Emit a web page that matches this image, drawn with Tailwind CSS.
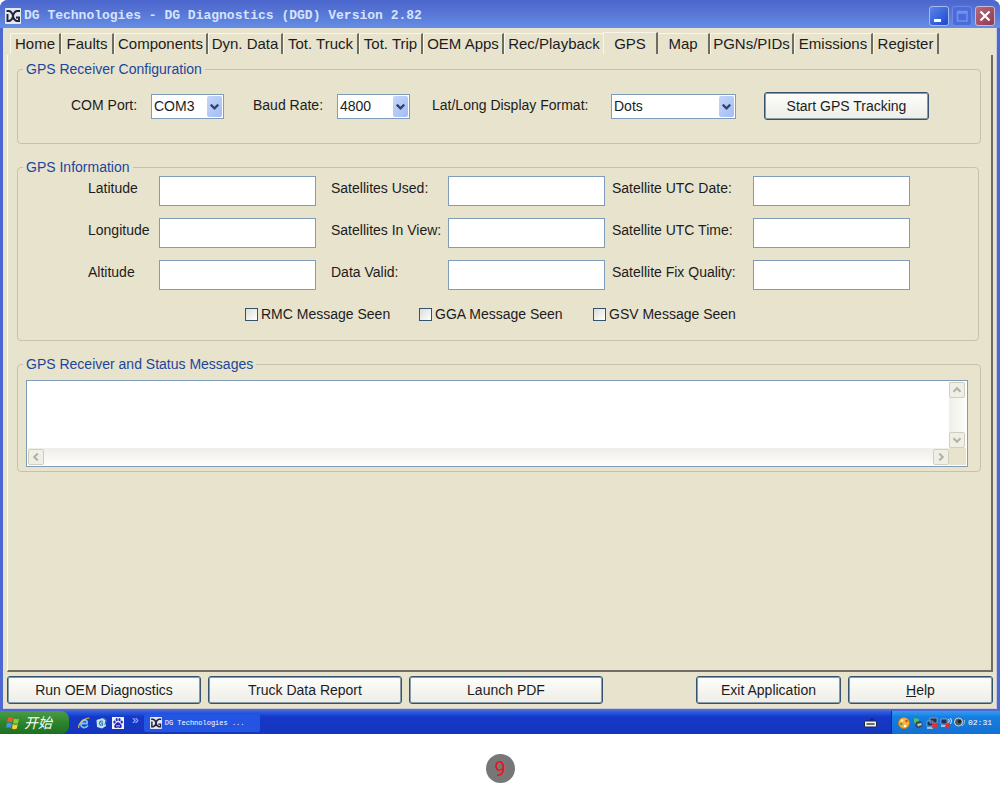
<!DOCTYPE html>
<html lang="en">
<head>
<meta charset="utf-8">
<title>DG Diagnostics</title>
<script src="https://cdn.jsdelivr.net/npm/@tailwindcss/browser@4"></script>
</head>
<body class="bg-white font-['Liberation_Sans',Arial,sans-serif] text-sm leading-4 text-[#1c1c1c]">
<svg class="hidden" aria-hidden="true">
  <symbol id="dg" viewBox="0 0 16 16">
    <rect width="16" height="16" rx="1" fill="#e6e8f1"/>
    <path d="M1.500 3H4Q7 3.500 8 8T12 13H14V9.500H11M1.500 13H4Q7 12.500 8 8T12 3H15M2.500 6V13" fill="none" stroke="#20233a" stroke-width="1.900"/>
  </symbol>
  <symbol id="down" viewBox="0 0 16 16">
    <path d="M4 6L8 10L12 6" fill="none" stroke="currentColor" stroke-width="2.400"/>
  </symbol>
</svg>

<div class="flex min-h-[711px] flex-col rounded-t-lg bg-[#4d68d2]">
  <header class="flex h-7 items-center gap-[3px] rounded-t-lg bg-linear-to-b from-[#4b66cc] via-[#5877d6] to-[#668ee6] pl-[5px] pr-[5px] pt-[3px]">
    <svg class="size-4 shrink-0"><use href="#dg"/></svg>
    <h1 class="grow whitespace-pre font-['Liberation_Mono',monospace] text-[13px] font-bold text-[#d5e4ff]">DG Technologies - DG Diagnostics (DGD) Version 2.82</h1>
    <div class="flex gap-[3px]">
      <button aria-label="Minimize" class="flex size-5 items-center justify-center rounded-[3px] border border-[#a5baf3] bg-linear-to-br from-[#5c85ea] to-[#1f44cc]">
        <svg class="size-4" viewBox="0 0 16 16"><rect x="3" y="11" width="7" height="3" fill="#fff"/></svg>
      </button>
      <button aria-label="Maximize" disabled class="flex size-5 items-center justify-center rounded-[3px] border border-[#6c8ae4] bg-[#4b6bdb]">
        <svg class="size-4" viewBox="0 0 16 16"><path d="M3.500 3.500H13V13H3.500zM3 5H13" fill="none" stroke="#7491ea" stroke-width="1.500"/></svg>
      </button>
      <button aria-label="Close" class="flex size-5 items-center justify-center rounded-[3px] border border-[#c9b8d8] bg-linear-to-br from-[#b56a7c] to-[#8f3a50]">
        <svg class="size-4" viewBox="0 0 16 16"><path d="M3.500 3.500L12.500 12.500M12.500 3.500L3.500 12.500" stroke="#fff" stroke-width="2.200"/></svg>
      </button>
    </div>
  </header>

  <main class="mb-0.5 ml-[3px] mr-[3px] flex grow flex-col border-b border-r border-[#c9c9dc] bg-[#e8e3cd] pb-1 pl-1 pr-[3px] pt-1">
    <nav role="tablist" class="ml-[3px] flex h-[22px] items-end text-[15px] leading-[18px] *:h-[21px] *:shrink-0 *:border-l *:border-r-2 *:border-t *:border-l-[#f8f6ec] *:border-r-[#6f6c60] *:border-t-[#f8f6ec]">
      <button role="tab" class="w-[51px]">Home</button>
      <button role="tab" class="w-[53px]">Faults</button>
      <button role="tab" class="w-[94px]">Components</button>
      <button role="tab" class="w-[75px]">Dyn. Data</button>
      <button role="tab" class="w-[76px]">Tot. Truck</button>
      <button role="tab" class="w-[64px]">Tot. Trip</button>
      <button role="tab" class="w-[81px]">OEM Apps</button>
      <button role="tab" class="w-[99px] border-r-0!">Rec/Playback</button>
      <button role="tab" aria-selected="true" class="h-[22px]! w-[55px]">GPS</button>
      <button role="tab" class="w-[52px] border-l-0!">Map</button>
      <button role="tab" class="w-[84px]">PGNs/PIDs</button>
      <button role="tab" class="w-[79px]">Emissions</button>
      <button role="tab" class="w-[66px]">Register</button>
    </nav>

    <section class="mt-px flex grow flex-col gap-[15px] border-b-2 border-l border-r-2 border-b-[#6f6c60] border-l-[#fbfaf3] border-r-[#6f6c60] pl-[9px] pr-[10px] pt-1.5">
      <fieldset class="h-[83px] rounded-[4px] border border-[#c6c4a8] pl-[53px]">
        <legend class="ml-[-48px] px-[3px] text-[#1c469c]">GPS Receiver Configuration</legend>
        <div class="mt-[15px] flex h-7 items-center">
          <label for="com" class="w-20 pb-0.5">COM Port:</label>
          <div class="relative w-[73px]">
            <select id="com" class="h-[25px] w-full appearance-none border border-[#7f9db9] bg-white pl-0.5"><option>COM3</option></select>
            <svg class="pointer-events-none absolute right-0.5 top-0.5 h-[21px] w-[15px] rounded-[2px] bg-linear-to-br from-[#c6d6fb] to-[#a3bcf4] text-[#33456e]"><use href="#down"/></svg>
          </div>
          <label for="baud" class="ml-[29px] w-[84px] pb-0.5">Baud Rate:</label>
          <div class="relative w-[73px]">
            <select id="baud" class="h-[25px] w-full appearance-none border border-[#7f9db9] bg-white pl-0.5"><option>4800</option></select>
            <svg class="pointer-events-none absolute right-0.5 top-0.5 h-[21px] w-[15px] rounded-[2px] bg-linear-to-br from-[#c6d6fb] to-[#a3bcf4] text-[#33456e]"><use href="#down"/></svg>
          </div>
          <label for="fmt" class="ml-[22px] w-[179px] pb-0.5">Lat/Long Display Format:</label>
          <div class="relative w-[125px]">
            <select id="fmt" class="h-[25px] w-full appearance-none border border-[#7f9db9] bg-white pl-0.5"><option>Dots</option></select>
            <svg class="pointer-events-none absolute right-0.5 top-0.5 h-[21px] w-[15px] rounded-[2px] bg-linear-to-br from-[#c6d6fb] to-[#a3bcf4] text-[#33456e]"><use href="#down"/></svg>
          </div>
          <button class="ml-7 h-7 w-[165px] rounded-[3px] border border-[#33536f] bg-linear-to-b from-[#fdfdfb] to-[#eeede6] shadow-[inset_0_0_0_1px_#8a9ba8]">Start GPS Tracking</button>
        </div>
      </fieldset>

      <fieldset class="mr-0.5 h-[182px] rounded-[4px] border border-[#c6c4a8] pl-[70px]">
        <legend class="ml-[-65px] px-[3px] text-[#1c469c]">GPS Information</legend>
        <div class="mt-px grid grid-cols-[71px_172px_117px_164px_141px_156px] gap-y-3 *:[input]:h-[30px] *:[input]:w-[157px] *:[input]:border *:[input]:border-[#7f9db9] *:[input]:bg-white *:[input]:px-1 *:[label]:pt-1">
          <label for="lat">Latitude</label><input id="lat" type="text">
          <label for="used">Satellites Used:</label><input id="used" type="text">
          <label for="date">Satellite UTC Date:</label><input id="date" type="text">
          <label for="lon">Longitude</label><input id="lon" type="text">
          <label for="view">Satellites In View:</label><input id="view" type="text">
          <label for="time">Satellite UTC Time:</label><input id="time" type="text">
          <label for="alt">Altitude</label><input id="alt" type="text">
          <label for="valid">Data Valid:</label><input id="valid" type="text">
          <label for="fix">Satellite Fix Quality:</label><input id="fix" type="text">
        </div>
        <div class="ml-[157px] mt-4 flex *:flex *:w-[174px] *:items-center *:gap-[3px]">
          <label><input type="checkbox" class="size-[13px] appearance-none border border-[#33536f] bg-linear-to-br from-[#dcdcd7] to-white"><span>RMC Message Seen</span></label>
          <label><input type="checkbox" class="size-[13px] appearance-none border border-[#33536f] bg-linear-to-br from-[#dcdcd7] to-white"><span>GGA Message Seen</span></label>
          <label><input type="checkbox" class="size-[13px] appearance-none border border-[#33536f] bg-linear-to-br from-[#dcdcd7] to-white"><span>GSV Message Seen</span></label>
        </div>
      </fieldset>

      <fieldset class="h-[116px] rounded-[4px] border border-[#c6c4a8] pl-2 pr-3">
        <legend class="ml-[-3px] px-[3px] text-[#1c469c]"><label for="log">GPS Receiver and Status Messages</label></legend>
        <div class="mt-2 grid h-[87px] grid-cols-[1fr_17px] grid-rows-[1fr_17px] border border-[#7f9db9] bg-white p-px">
          <textarea id="log" class="size-full resize-none overflow-hidden bg-white px-1 outline-none"></textarea>
          <div class="flex flex-col justify-between bg-linear-to-r from-[#efeee8] to-[#fdfdfb] text-[#b4b2a4] *:size-4 *:rounded-[2px] *:border *:border-[#d0cfbe] *:bg-[#f0efe6]">
            <button aria-label="Scroll up"><svg class="size-3.5 rotate-180" viewBox="0 0 16 16"><use href="#down"/></svg></button>
            <button aria-label="Scroll down"><svg class="size-3.5" viewBox="0 0 16 16"><use href="#down"/></svg></button>
          </div>
          <div class="flex items-center justify-between bg-linear-to-b from-[#efeee8] to-[#fdfdfb] text-[#b4b2a4] *:size-4 *:rounded-[2px] *:border *:border-[#d0cfbe] *:bg-[#f0efe6]">
            <button aria-label="Scroll left"><svg class="size-3.5 rotate-90" viewBox="0 0 16 16"><use href="#down"/></svg></button>
            <button aria-label="Scroll right"><svg class="size-3.5 -rotate-90" viewBox="0 0 16 16"><use href="#down"/></svg></button>
          </div>
          <div class="bg-[#e8e3cd]"></div>
        </div>
      </fieldset>
    </section>

    <div class="mt-1 flex h-7 gap-[7px] *:rounded-[3px] *:border *:border-[#33536f] *:bg-linear-to-b *:from-[#fdfdfb] *:to-[#eeede6] *:shadow-[inset_0_0_0_1px_#8a9ba8]">
      <button class="w-[194px]">Run OEM Diagnostics</button>
      <button class="w-[194px]">Truck Data Report</button>
      <button class="w-[194px]">Launch PDF</button>
      <button class="ml-auto w-[145px]">Exit Application</button>
      <button class="w-[145px]"><u>H</u>elp</button>
    </div>
  </main>
</div>

<footer class="flex h-[23px] items-stretch bg-linear-to-b from-[#2f62e2] via-[#1638c8] via-25% to-[#1435bd]">
  <button class="flex w-[69px] items-center gap-1 rounded-r-lg bg-linear-to-b from-[#4c9a48] via-[#2c852b] to-[#1e6f22] pl-1.5 font-['Liberation_Sans','Noto_Sans_CJK_SC',sans-serif] text-[14px] italic text-white">
    <svg class="size-3.5" viewBox="0 0 14 14"><path d="M2 2Q4.500 .5 7 2.200L6 6.500Q3.500 5 1 6.300z" fill="#ee5a2d"/><path d="M8 2.600Q10.500 4 13 2.700L12 7.200Q9.500 8.300 7 7z" fill="#85cf3b"/><path d="M.8 7.300Q3.300 6 5.800 7.600L4.800 12Q2.300 10.500 0 11.700z" fill="#4f8ff0"/><path d="M6.800 8.100Q9.300 9.500 11.800 8.200L10.800 12.600Q8.300 13.800 5.800 12.500z" fill="#f8cf35"/></svg>
    <span>开始</span>
  </button>
  <div class="ml-[9px] flex items-center gap-[5px]">
    <svg class="size-3" viewBox="0 0 12 12"><path d="M10 8.500Q8 11 5.500 10.500Q2.500 9.700 3 6.500Q4 3 7 3Q9.800 3.500 9 6.500H4" fill="none" stroke="#7cc3f5" stroke-width="1.800"/><path d="M1 11Q-.5 8 5 3.500Q10 0 11.300 1.500" fill="none" stroke="#f0c34d" stroke-width="1.100"/></svg>
    <svg class="size-3" viewBox="0 0 12 12"><path d="M1.500 3L8 1L11 3V9L7 11.500L2 10z" fill="#c8e4f3"/><path d="M8 4.500Q5.500 3 4.500 6Q4.500 9 7.500 8V6H6M8 1L11 3L10 8" fill="none" stroke="#2d79b3" stroke-width="1.200"/></svg>
    <svg class="size-3" viewBox="0 0 12 12"><rect width="12" height="12" fill="#f1f2ff"/><g fill="#2328b5"><ellipse cx="2.500" cy="5" rx="1.200" ry="1.600"/><ellipse cx="4.700" cy="2.700" rx="1.100" ry="1.600"/><ellipse cx="7.500" cy="2.700" rx="1.100" ry="1.600"/><ellipse cx="9.700" cy="5" rx="1.200" ry="1.600"/><path d="M6 5Q7.500 5.500 9.500 8Q10.500 11 8 11L6 10.500L4 11Q1.500 11 2.500 8Q4.500 5.500 6 5z"/></g><path d="M5 8V9.500M7 8V9.500" stroke="#fff"/></svg>
    <span class="ml-[3px] pb-1.5 text-[12px] text-[#a9c2ff]">»</span>
  </div>
  <button class="ml-[5px] mb-0.5 mt-[3px] flex w-[116px] items-center gap-[3px] rounded-[2px] bg-[#2355e2] pl-1.5 font-['Liberation_Mono',monospace] text-[7px] text-white">
    <svg class="size-3"><use href="#dg"/></svg>
    <span>DG Technologies ...</span>
  </button>
  <svg class="ml-auto mr-[14px] mt-1.5 h-3 w-[13px]" viewBox="0 0 13 12"><path d="M6 4Q6 1 10 2" fill="none" stroke="#10204e"/><rect x=".5" y="4" width="12" height="6" rx="1" fill="#f1f0e5" stroke="#1b244b"/><path d="M2.500 7H10.500" stroke="#6a6d76" stroke-width="2"/></svg>
  <div class="flex w-[109px] items-center gap-0.5 border-l border-[#0b2d8c] bg-linear-to-b from-[#359cf2] via-[#157fe2] via-25% to-[#1270d2] pl-1.5">
    <svg class="size-3" viewBox="0 0 12 12"><circle cx="6" cy="6" r="5.500" fill="#f4b63c" stroke="#c7761e"/><circle cx="4" cy="3.500" r="1.300" fill="#fff2a8"/><circle cx="8.500" cy="4" r="1.200" fill="#d84329"/><circle cx="3.300" cy="7" r="1.200" fill="#3e9b4b"/><circle cx="7" cy="9" r="1.200" fill="#fff"/></svg>
    <svg class="size-3" viewBox="0 0 12 12"><path d="M4 5L9 4L11 9L6 11.500L3 9z" fill="#374852"/><path d="M5 7L9 6L10 8L6 9.500z" fill="#b9c5c9"/><path d="M2 1L7 2L6 5L4.500 4Q3.500 5.500 4 7L2 5z" fill="#4ec845"/></svg>
    <svg class="size-3" viewBox="0 0 12 12"><path d="M4 1H11V6H4zM1 4H7V9H1z" fill="#223056" stroke="#a6b4cf" stroke-width=".7"/><path d="M1 11H7" stroke="#d5d7df" stroke-width="1.500"/><path d="M6.500 6.500L11 11M11 6.500L6.500 11" stroke="#e22f2b" stroke-width="2"/></svg>
    <svg class="size-3" viewBox="0 0 12 12"><path d="M1 2H7V7H1z" fill="#223056" stroke="#a6b4cf" stroke-width=".7"/><path d="M1 9H6" stroke="#d5d7df" stroke-width="1.500"/><path d="M8.500 2Q10 4 8.500 6M10.500 1Q12.500 4 10.500 7" fill="none" stroke="#dbe8f7"/><path d="M5 6.500L9.500 11M9.500 6.500L5 11" stroke="#d93232" stroke-width="1.800"/></svg>
    <svg class="size-3" viewBox="0 0 12 12"><circle cx="4.500" cy="5" r="4" fill="#505860" stroke="#d4d8d8"/><circle cx="5.500" cy="4.500" r="1.800" fill="#1e242c"/><path d="M8 9Q11 7 10.500 3" fill="none" stroke="#a5bcc8"/></svg>
    <time class="font-['Liberation_Mono',monospace] text-[8px] text-white">02:31</time>
  </div>
</footer>

<div class="mt-5 flex justify-center">
  <span class="flex size-[29px] items-center justify-center rounded-full bg-[#777777] font-['Roboto',sans-serif] text-[20px] text-[#e8141c]">9</span>
</div>
</body>
</html>
